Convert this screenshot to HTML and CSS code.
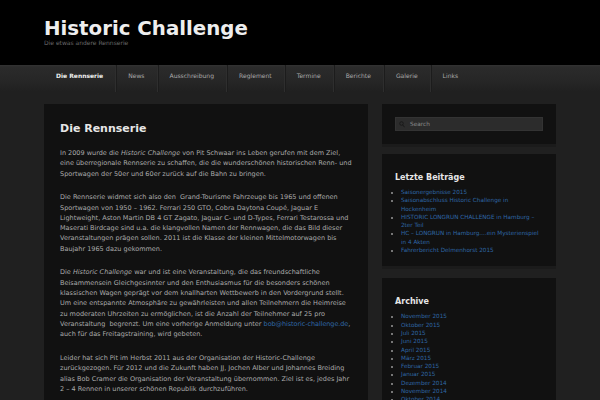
FILE: index.html
```html
<!DOCTYPE html>
<html lang="de">
<head>
<meta charset="utf-8">
<title>Historic Challenge</title>
<link rel="stylesheet" href="styles.css">
</head>
<body>
<header class="site-header">
  <div class="wrap">
    <h1 class="site-title">Historic Challenge</h1>
    <p class="tagline">Die etwas andere Rennserie</p>
  </div>
</header>
<nav class="nav">
  <ul class="wrap nav-list">
    <li class="active">Die Rennserie</li>
    <li>News</li>
    <li>Ausschreibung</li>
    <li>Reglement</li>
    <li>Termine</li>
    <li>Berichte</li>
    <li>Galerie</li>
    <li>Links</li>
  </ul>
</nav>
<div class="wrap page">
  <main class="main">
    <h2 class="entry-title">Die Rennserie</h2>
    <p>In 2009 wurde die <em>Historic Challenge</em> von Pit Schwaar ins Leben gerufen mit dem Ziel, eine überregionale Rennserie zu schaffen, die die wunderschönen historischen Renn- und Sportwagen der 50er und 60er zurück auf die Bahn zu bringen.</p>
    <p>Die Rennserie widmet sich also den&nbsp; Grand-Tourisme Fahrzeuge bis 1965 und offenen Sportwagen von 1950 – 1962. Ferrari 250 GTO, Cobra Daytona Coupé, Jaguar E Lightweight, Aston Martin DB 4 GT Zagato, Jaguar C- und D-Types, Ferrari Testarossa und Maserati Birdcage sind u.a. die klangvollen Namen der Rennwagen, die das Bild dieser Veranstaltungen prägen sollen. 2011 ist die Klasse der kleinen Mittelmotorwagen bis Baujahr 1965 dazu gekommen.</p>
    <p>Die <em>Historic Challenge</em> war und ist eine Veranstaltung, die das freundschaftliche Beisammensein Gleichgesinnter und den Enthusiasmus für die besonders schönen klassischen Wagen geprägt vor dem knallharten Wettbewerb in den Vordergrund stellt. Um eine entspannte Atmosphäre zu gewährleisten und allen Teilnehmern die Heimreise zu moderaten Uhrzeiten zu ermöglichen, ist die Anzahl der Teilnehmer auf 25 pro Veranstaltung&nbsp; begrenzt. Um eine vorherige Anmeldung unter <span class="nowrap"><a href="#" class="email">bob@historic-challenge.de</a>,</span> auch für das Freitagstraining, wird gebeten.</p>
    <p>Leider hat sich Pit im Herbst 2011 aus der Organisation der Historic-Challenge zurückgezogen. Für 2012 und die Zukunft haben JJ, Jochen Alber und Johannes Breiding alias Bob Cramer die Organisation der Veranstaltung übernommen. Ziel ist es, jedes Jahr 2 – 4 Rennen in unserer schönen Republik durchzuführen.</p>
  </main>
  <aside class="sidebar">
    <div class="widget search-widget">
      <div class="search-field">
        <svg class="search-icon" width="6" height="7" viewBox="0 0 6 7"><circle cx="2.5" cy="2.5" r="1.8" fill="none" stroke="#1a1a1a" stroke-width="1"/><path d="M3.8 3.9 5.5 6.2" stroke="#1a1a1a" stroke-width="1"/></svg>
        <span>Search</span>
      </div>
    </div>
    <div class="widget recent">
      <h3 class="widget-title">Letzte Beiträge</h3>
      <ul class="widget-list">
        <li><a href="#">Saisonergebnisse 2015</a></li>
        <li><a href="#">Saisonabschluss Historic Challenge in Hockenheim</a></li>
        <li><a href="#">HISTORIC LONGRUN CHALLENGE in Hamburg – 2ter Teil</a></li>
        <li><a href="#">HC – LONGRUN in Hamburg….ein Mysterienspiel in 4 Akten</a></li>
        <li><a href="#">Fahrerbericht Delmenhorst 2015</a></li>
      </ul>
    </div>
    <div class="widget archive">
      <h3 class="widget-title">Archive</h3>
      <ul class="widget-list">
        <li><a href="#">November 2015</a></li>
        <li><a href="#">Oktober 2015</a></li>
        <li><a href="#">Juli 2015</a></li>
        <li><a href="#">Juni 2015</a></li>
        <li><a href="#">April 2015</a></li>
        <li><a href="#">März 2015</a></li>
        <li><a href="#">Februar 2015</a></li>
        <li><a href="#">Januar 2015</a></li>
        <li><a href="#">Dezember 2014</a></li>
        <li><a href="#">November 2014</a></li>
        <li><a href="#">Oktober 2014</a></li>
        <li><a href="#">September 2014</a></li>
      </ul>
    </div>
  </aside>
</div>
</body>
</html>
```
FILE: styles.css
```css
* { box-sizing: border-box; }
html, body { margin: 0; padding: 0; }
body {
  background: #202020;
  font-family: "DejaVu Sans", Verdana, sans-serif;
  color: #ababab;
  overflow: hidden;
  height: 400px;
}
.wrap { width: 512px; margin: 0 auto; }
.site-header { background: #000; height: 65px; }
.site-header .wrap { padding-top: 17px; }
.site-title {
  margin: 0;
  font-size: 19.8px;
  line-height: 24px;
  font-weight: bold;
  color: #eee;
}
.tagline {
  margin: -2px 0 0;
  font-size: 6px;
  line-height: 8px;
  color: #6a6a6a;
}
.nav {
  height: 27px;
  background: linear-gradient(#333 0, #2b2b2b 2px, #262626 60%, #202020 100%);
}
.nav-list {
  list-style: none;
  margin: 0 auto;
  padding: 0;
  display: flex;
  height: 27px;
}
.nav-list li {
  padding: 0 12px;
  font-size: 6.05px;
  line-height: 22px;
  color: #a9a9a9;
  border-right: 1px solid #2e2e2e;
  box-shadow: 1px 0 0 #1c1c1c;
  white-space: nowrap;
}
.nav-list li.active { color: #eee; font-weight: bold; font-size: 6px; }
.nav-list li:last-child { border-right: none; box-shadow: none; }
.page {
  display: flex;
  align-items: flex-start;
  gap: 14px;
  padding-top: 12px;
}
.main {
  width: 324px;
  flex: none;
  background: #111;
  padding: 18px 15px 20px 16px;
}
.entry-title {
  margin: 0 0 12px;
  font-size: 11px;
  line-height: 14px;
  color: #e6e6e6;
}
.main p {
  margin: 0 0 13.4px;
  font-size: 6.5px;
  line-height: 10.3px;
}
.nowrap { white-space: nowrap; }
.email { letter-spacing: -0.08px; }
a { color: #2f67a6; text-decoration: none; }
.sidebar {
  width: 174px;
  flex: none;
  display: flex;
  flex-direction: column;
}
.widget {
  background: #111;
  padding: 19px 13px 12px;
  box-shadow: 0 3px 0 #1b1b1b;
}
.search-widget { padding: 13px; height: 40px; }
.recent { margin-top: 10px; }
.archive { margin-top: 12px; }
.search-field {
  height: 14px;
  background: #2c2c2c;
  border: 1px solid #333;
  display: flex;
  align-items: center;
  gap: 5px;
  padding-left: 3px;
  font-size: 5.8px;
  color: #8a8a8a;
}
.search-icon { flex: none; }
.widget-title {
  margin: 0 0 5px;
  font-size: 8px;
  line-height: 10px;
  color: #e6e6e6;
}
.widget-list {
  margin: 0;
  padding: 0 0 0 6px;
  font-size: 5.7px;
  line-height: 8.3px;
}
.widget-list li::marker { color: #999; }
```
